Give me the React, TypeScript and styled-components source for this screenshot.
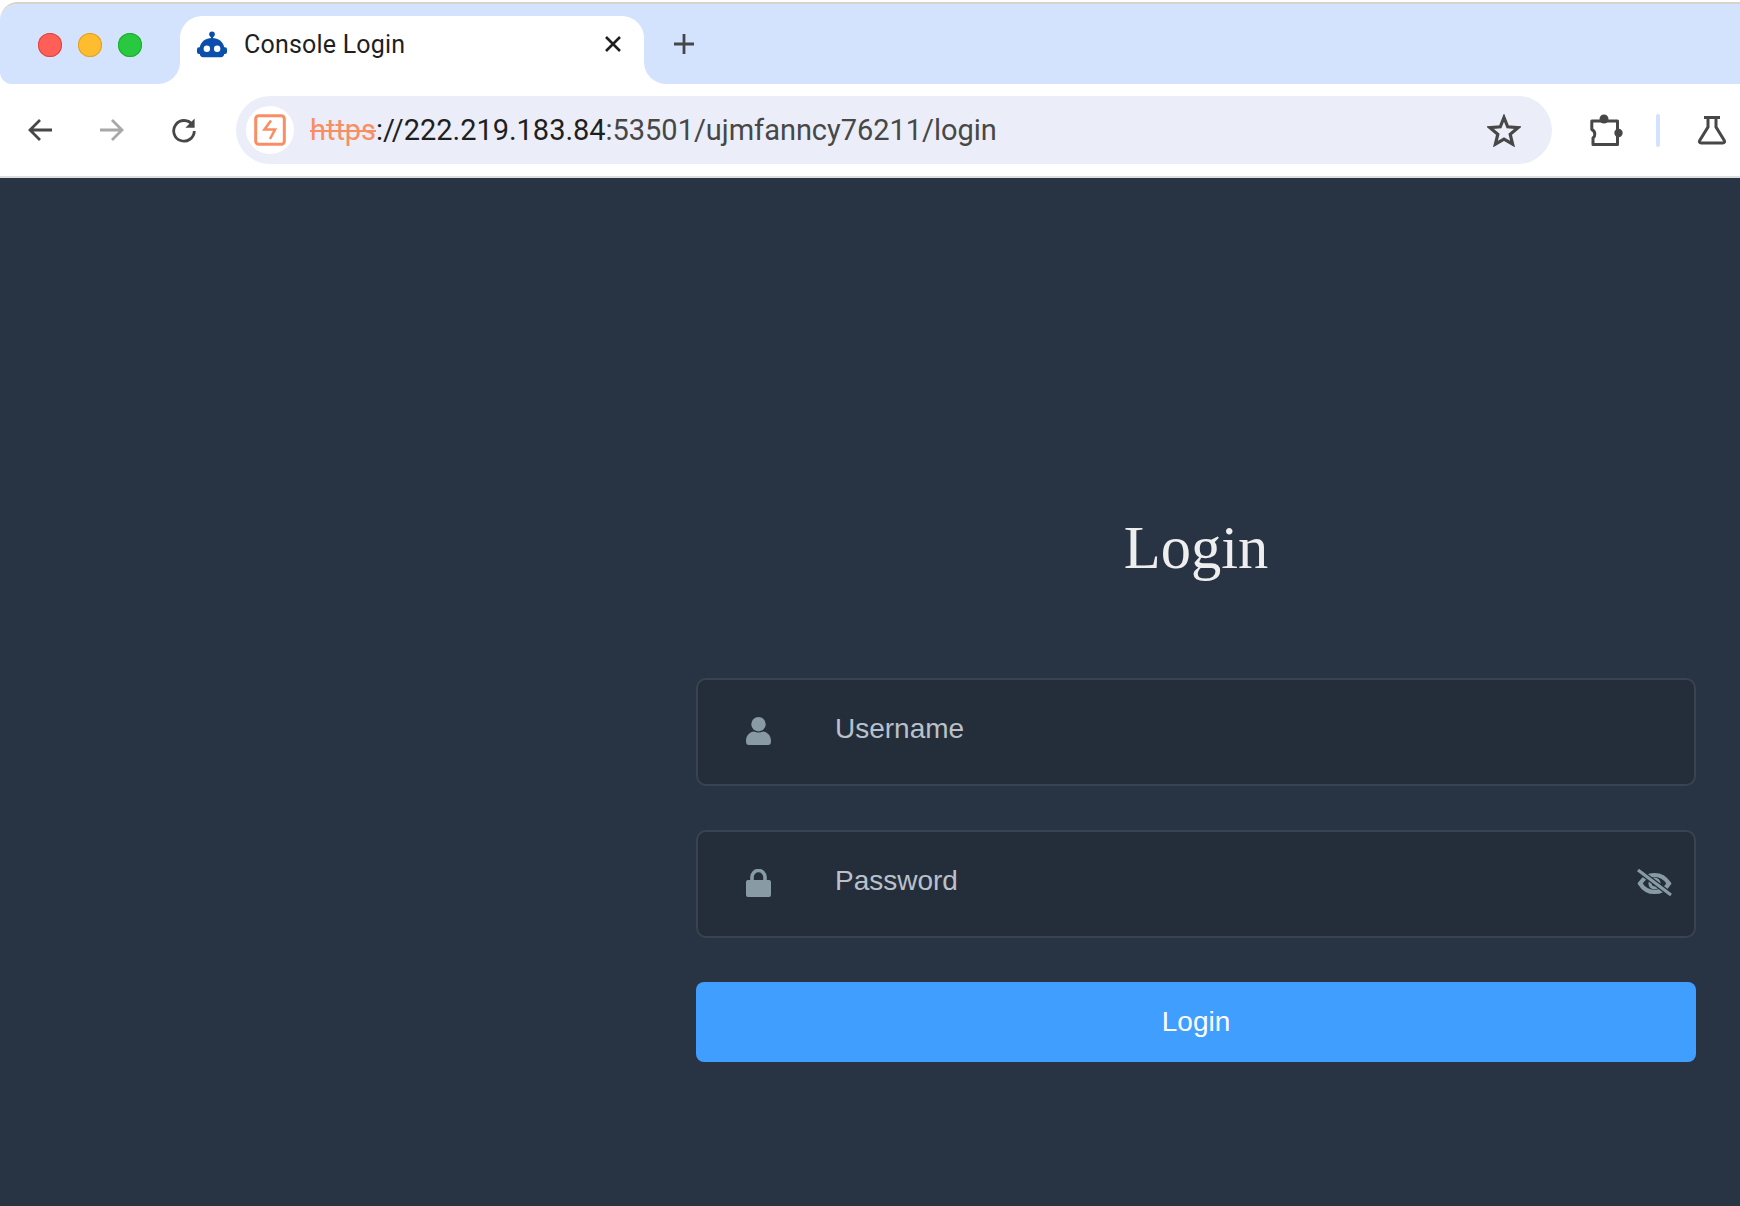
import React from "react";
import styled, { createGlobalStyle } from "styled-components";

const Global = createGlobalStyle`
  html, body { margin: 0; padding: 0; background: #ffffff; }
  body { width: 1740px; height: 1206px; overflow: hidden; font-family: "Liberation Sans", Arial, sans-serif; }
`;

const Screen = styled.div`
  width: 1740px;
  height: 1206px;
  display: flex;
  flex-direction: column;
  background: #283443;
  overflow: hidden;
`;
const Browser = styled.header`
  flex: none;
  background: #ffffff;
  border-bottom: 2px solid #dedede;
  padding-top: 2px;
`;
const TabStrip = styled.div`
  height: 82px;
  display: flex;
  background: #ffffff;
  border-top: 2px solid #d8d3c4;
  border-top-left-radius: 18px;
  overflow: hidden;
  box-sizing: border-box;
`;
const LeftCell = styled.div`
  width: 180px;
  flex: none;
  background: #d3e3fd;
  border-radius: 0 0 22px 12px;
  display: flex;
  align-items: center;
  gap: 16px;
  padding: 0 0 0 38px;
  box-sizing: border-box;
  height: 80px;
`;
const Light = styled.span<{ $c: string; $b: string }>`
  width: 24px;
  height: 24px;
  margin-top: 2px;
  border-radius: 50%;
  background: ${(p) => p.$c};
  box-shadow: inset 0 0 0 1px ${(p) => p.$b};
`;
const TabSlot = styled.div`
  width: 464px;
  flex: none;
  background: #d3e3fd;
  padding-top: 12px;
  box-sizing: border-box;
`;
const Tab = styled.div`
  height: 68px;
  background: #ffffff;
  border-radius: 22px 22px 0 0;
  display: flex;
  align-items: center;
  padding: 0 21px 12px 17px;
  box-sizing: border-box;
`;
const TabTitle = styled.span`
  flex: 1;
  margin-left: 17px;
  font-family: Roboto, "Liberation Sans", sans-serif;
  font-size: 25px;
  letter-spacing: 0.2px;
  color: #1f1f1f;
  white-space: nowrap;
`;
const RightCell = styled.div`
  flex: 1;
  background: #d3e3fd;
  border-bottom-left-radius: 22px;
  display: flex;
  align-items: center;
  padding: 0 0 0 27px;
`;
const Toolbar = styled.div`
  height: 92px;
  display: flex;
  align-items: center;
  padding-left: 27px;
  box-sizing: border-box;
`;
const NavIcon = styled.svg<{ $ml?: number }>`
  flex: none;
  display: block;
  margin-left: ${(p) => p.$ml ?? 0}px;
`;
const Omnibox = styled.div`
  width: 1316px;
  height: 68px;
  margin-left: 39px;
  flex: none;
  border-radius: 34px;
  background: #ebeef8;
  display: flex;
  align-items: center;
  padding: 0 31px 0 10px;
  box-sizing: border-box;
`;
const SiteChip = styled.span`
  width: 48px;
  height: 48px;
  flex: none;
  border-radius: 50%;
  background: #ffffff;
  display: flex;
  align-items: center;
  justify-content: center;
`;
const Url = styled.span`
  flex: 1;
  margin-left: 16px;
  font-family: Roboto, "Liberation Sans", sans-serif;
  font-size: 29px;
  letter-spacing: -0.03px;
  color: #474747;
  white-space: nowrap;
`;
const Scheme = styled.span`
  color: #f98d63;
  text-decoration: line-through;
`;
const Host = styled.span`
  color: #1f1f1f;
`;
const Divider = styled.span`
  flex: none;
  width: 4px;
  height: 33px;
  margin-left: 33px;
  border-radius: 2px;
  background: #d3e3fd;
`;

const Page = styled.main`
  flex: 1;
  display: flex;
  justify-content: flex-end;
  padding: 335px 44px 0 0;
`;
const Form = styled.form`
  width: 1000px;
  display: flex;
  flex-direction: column;
`;
const Title = styled.h3`
  margin: 0 0 96px;
  font-family: "Liberation Serif", "Times New Roman", serif;
  font-size: 60.5px;
  line-height: 69px;
  font-weight: 400;
  color: #eeeeee;
  text-align: center;
`;
const Field = styled.div`
  height: 108px;
  margin-bottom: 44px;
  display: flex;
  align-items: center;
  box-sizing: border-box;
  padding: 0 22px 0 48px;
  background: #232e3a;
  border: 2px solid #394351;
  border-radius: 10px;
`;
const FieldIcon = styled.svg`
  flex: none;
  display: block;
  margin-top: -2px;
  color: #889aa4;
`;
const Placeholder = styled.span`
  flex: 1;
  margin: 0 0 6px 64px;
  font-size: 28px;
  color: #bac0cb;
`;
const Submit = styled.button`
  height: 80px;
  border: 0;
  border-radius: 8px;
  background: #409eff;
  color: #ffffff;
  font-family: "Liberation Sans", Arial, sans-serif;
  font-size: 28px;
`;

export default function App() {
  return (
    <Screen>
      <Global />
      <Browser>
        <TabStrip>
          <LeftCell>
            <Light $c="#ff5f57" $b="#e0443e" />
            <Light $c="#febc2e" $b="#dea123" />
            <Light $c="#28c840" $b="#1dad2b" />
          </LeftCell>
          <TabSlot>
            <Tab>
              <svg width="30" height="27" viewBox="0 0 32 28" style={{ flex: "none" }}>
                <circle cx="16" cy="3" r="3" fill="#0b4fae" />
                <rect x="14.8" y="4" width="2.4" height="5" fill="#0b4fae" />
                <path
                  d="M16 7c7 0 12 4 13 10h1a2 2 0 0 1 2 2v3a2 2 0 0 1-2 2h-1c0 2-1.500 3.500-3.500 3.500H6.500C4.500 27.500 3 26 3 24H2a2 2 0 0 1-2-2v-3a2 2 0 0 1 2-2h1C4 11 9 7 16 7z"
                  fill="#0b4fae"
                />
                <circle cx="10.5" cy="18.5" r="3.4" fill="#ffffff" />
                <circle cx="21.5" cy="18.5" r="3.4" fill="#ffffff" />
              </svg>
              <TabTitle>Console Login</TabTitle>
              <svg width="20" height="20" viewBox="0 0 20 20">
                <path d="M3 3l14 14M17 3L3 17" stroke="#1f1f1f" strokeWidth="2.6" fill="none" />
              </svg>
            </Tab>
          </TabSlot>
          <RightCell>
            <svg width="26" height="26" viewBox="0 0 26 26">
              <path d="M13 3v20M3 13h20" stroke="#444746" strokeWidth="2.8" fill="none" />
            </svg>
          </RightCell>
        </TabStrip>
        <Toolbar>
          <NavIcon width="26" height="26" viewBox="0 0 26 26">
            <path d="M25 13H3M13 3L3 13l10 10" stroke="#474747" strokeWidth="2.8" fill="none" />
          </NavIcon>
          <NavIcon $ml={46} width="26" height="26" viewBox="0 0 26 26">
            <path d="M1 13h22M13 3l10 10-10 10" stroke="#a8a8a8" strokeWidth="2.8" fill="none" />
          </NavIcon>
          <NavIcon $ml={46} width="26" height="26" viewBox="0 0 26 26">
            <path d="M21.5 8A10.3 10.3 0 1 0 23.3 14" stroke="#474747" strokeWidth="2.8" fill="none" />
            <path d="M23.6 1.5v9.2h-9.2z" fill="#474747" />
          </NavIcon>
          <Omnibox>
            <SiteChip>
              <svg width="32" height="32" viewBox="0 0 32 32">
                <rect x="1.7" y="1.7" width="28.6" height="28.6" rx="3" fill="none" stroke="#f98d63" strokeWidth="3" />
                <path d="M17 6.500L10.500 15.500H21L16 25" fill="none" stroke="#f98d63" strokeWidth="2.600" />
              </svg>
            </SiteChip>
            <Url>
              <Scheme>https</Scheme>
              <Host>://222.219.183.84</Host>:53501/ujmfanncy76211/login
            </Url>
            <svg width="34" height="33" viewBox="0 0 34 33">
              <path
                d="M17 3.500l3.700 9.300 10.300.9-7.800 6.600 2.400 9.800L17 25l-8.600 5.100 2.400-9.800L3 13.700l10.300-.9z"
                fill="none"
                stroke="#474747"
                strokeWidth="3.200"
              />
            </svg>
          </Omnibox>
          <NavIcon $ml={38} width="33" height="33" viewBox="0 0 33 33">
            <path
              d="M4 7h23.500v8.500M27.500 23v7.500H3v-6.500a5 5 0 0 0 1.800-4.200A5 5 0 0 0 1.800 15.500V7h2.200"
              fill="none"
              stroke="#474747"
              strokeWidth="3"
              strokeLinejoin="round"
            />
            <path d="M27.500 14v11" stroke="#474747" strokeWidth="3" />
            <circle cx="14" cy="5" r="4.500" fill="#474747" />
            <circle cx="28.500" cy="19" r="4.200" fill="#474747" />
          </NavIcon>
          <Divider />
          <NavIcon $ml={37} width="30" height="30" viewBox="0 0 30 30">
            <path
              d="M7 2.500h16M11 2.500v9.500L2.700 25.500c-.8 1.300 0 2.500 1.500 2.500h21.600c1.500 0 2.300-1.200 1.500-2.500L19 12V2.500"
              fill="none"
              stroke="#474747"
              strokeWidth="3"
            />
          </NavIcon>
        </Toolbar>
      </Browser>
      <Page>
        <Form>
          <Title>Login</Title>
          <Field>
            <FieldIcon width="25" height="28" viewBox="0 0 25 28">
              <circle cx="12.5" cy="7.200" r="7.200" fill="currentColor" />
              <path d="M0 24c0-6 4-9 8-9.500 3 1.400 6 1.400 9 0 4 .5 8 3.500 8 9.500 0 3-1 4-3 4H3c-2 0-3-1-3-4z" fill="currentColor" />
            </FieldIcon>
            <Placeholder>Username</Placeholder>
          </Field>
          <Field>
            <FieldIcon width="25" height="28" viewBox="0 0 25 28">
              <path d="M6 12V8a6.500 6.500 0 0 1 13 0v4" fill="none" stroke="currentColor" strokeWidth="3.600" />
              <rect x="0" y="11" width="25" height="17" rx="2" fill="currentColor" />
            </FieldIcon>
            <Placeholder>Password</Placeholder>
            <FieldIcon width="35" height="28" viewBox="0 0 35 28">
              <path
                d="M3 14.500C6.500 9 11.500 6 17.500 6s11 3 14.500 8.500C28.500 20 23.500 23 17.500 23S6.500 20 3 14.500z"
                fill="none"
                stroke="currentColor"
                strokeWidth="4.200"
              />
              <circle cx="17.500" cy="14.500" r="4.400" fill="none" stroke="currentColor" strokeWidth="3.400" />
              <path d="M1 1l33 25" stroke="#232e3a" strokeWidth="5.500" />
              <path d="M1 1l33 25" stroke="currentColor" strokeWidth="3.200" />
            </FieldIcon>
          </Field>
          <Submit type="button">Login</Submit>
        </Form>
      </Page>
    </Screen>
  );
}
